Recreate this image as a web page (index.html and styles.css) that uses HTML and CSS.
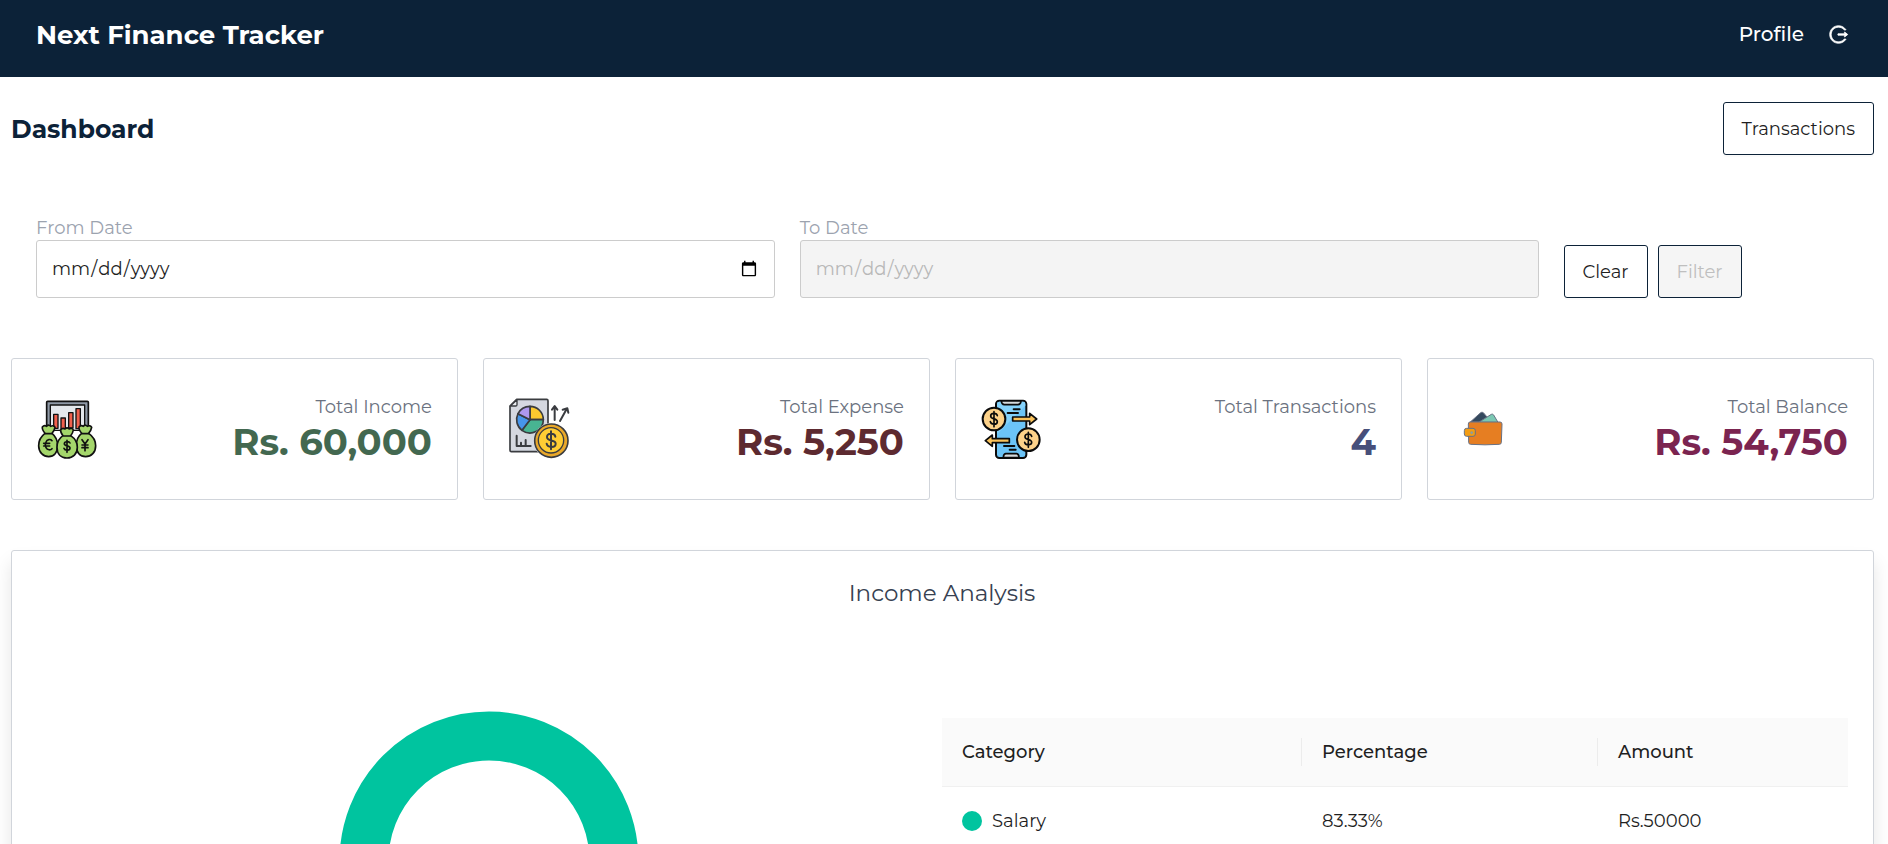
FILE: index.html
```html
<!DOCTYPE html>
<html lang="en">
<head>
<meta charset="utf-8">
<meta name="viewport" content="width=device-width, initial-scale=1">
<title>Next Finance Tracker</title>
<link rel="stylesheet" href="styles.css">
</head>
<body>
<header class="topbar">
  <a class="brand" href="#">Next Finance Tracker</a>
  <nav class="topbar-nav">
    <a class="profile" href="#profile">Profile</a>
    <button class="logout" type="button" aria-label="Log out">
      <svg viewBox="0 0 1024 1024" width="21" height="21" fill="currentColor" stroke="currentColor" stroke-width="36"><path d="M868 732h-70.3c-4.8 0-9.3 2.1-12.3 5.8-7 8.5-14.5 16.7-22.4 24.5a353.84 353.84 0 01-112.7 75.9A352.8 352.8 0 01512.4 866c-47.9 0-94.3-9.4-137.9-27.8a353.84 353.84 0 01-112.7-75.9 353.28 353.28 0 01-76-112.5C167.3 606.2 158 559.9 158 512s9.4-94.2 27.8-137.8c17.8-42.1 43.4-80 76-112.5s70.5-58.1 112.7-75.9c43.6-18.4 90-27.8 137.9-27.8 47.9 0 94.3 9.3 137.9 27.8 42.2 17.8 80.1 43.4 112.7 75.9 7.9 7.9 15.3 16.1 22.4 24.5 3 3.7 7.6 5.8 12.3 5.8H868c6.3 0 10.2-7 6.7-12.3C798 160.5 663.8 81.6 511.3 82 271.7 82.6 79.6 277.1 82 516.4 84.4 751.9 276.2 942 512.4 942c152.1 0 285.7-78.8 362.3-197.7 3.4-5.3-.4-12.3-6.7-12.3zm88.9-226.3L815 393.7c-5.3-4.2-13-.4-13 6.3v76H488c-4.4 0-8 3.6-8 8v56c0 4.4 3.6 8 8 8h314v76c0 6.7 7.8 10.5 13 6.3l141.9-112a8 8 0 000-12.6z"/></svg>
    </button>
  </nav>
</header>

<main class="page">
  <div class="page-head">
    <h1 class="page-title">Dashboard</h1>
    <button class="btn" type="button">Transactions</button>
  </div>

  <form class="filters">
    <div class="field">
      <label class="field-label" for="from-date">From Date</label>
      <input class="field-input" type="date" id="from-date">
    </div>
    <div class="field">
      <label class="field-label" for="to-date">To Date</label>
      <input class="field-input" type="date" id="to-date" disabled>
    </div>
    <div class="filter-actions">
      <button class="btn" type="reset">Clear</button>
      <button class="btn" type="submit" disabled>Filter</button>
    </div>
  </form>

  <section class="stats">
    <article class="card stat">
      <svg class="stat-icon" viewBox="48 52 186 186" stroke="#111" stroke-width="5" stroke-linejoin="round" stroke-linecap="round">
        <rect x="80" y="62" width="125" height="84" rx="3" fill="#8f99a6"/>
        <rect x="91" y="73" width="103" height="76" fill="#e4e8ec" stroke-width="4"/>
        <g fill="#f0604d" stroke-width="4">
          <rect x="101" y="101" width="13" height="42"/><rect x="123" y="112" width="13" height="32"/><rect x="146" y="96" width="13" height="46"/><rect x="168" y="84" width="13" height="60"/>
        </g>
        <g fill="#a4d66b">
          <path d="M75 158c-5-6-9-13-8-19 4-5 10-4 13-2 4-5 10-4 12 0 5-3 11-2 13 3-1 7-5 13-9 18 11 9 17 21 17 37 0 20-11 33-27 33s-30-13-30-33c0-16 7-28 19-37z"/>
          <path d="M185 158c-5-6-9-13-8-19 4-5 10-4 13-2 4-5 10-4 12 0 5-3 11-2 13 3-1 7-5 13-9 18 13 9 21 21 21 37 0 20-13 33-30 33s-28-13-28-33c0-16 4-28 16-37z"/>
          <path d="M129 165c-5-6-8-12-7-18 4-5 10-4 13-2 4-5 10-4 12 0 5-3 11-2 13 3-1 7-4 12-8 17 12 8 20 19 20 35 0 20-13 32-31 32s-30-12-30-32c0-16 6-27 18-35z"/>
        </g>
        <path d="M77 159h17M131 166h20M187 159h18" fill="none"/>
        <g fill="none" stroke-width="5">
          <path d="M96 180c-4-5-15-5-18 4-3 7-2 13 0 17 4 8 14 8 18 3M71 188h18M71 196h18"/>
          <path d="M150 187c-3-6-17-5-17 2 0 9 17 4 17 13 0 8-15 9-18 1M141 179v36"/>
          <path d="M186 177l9 13 9-13M195 190v20M186 193h18M186 201h18"/>
        </g>
      </svg>
      <div class="stat-body"><h2 class="stat-label">Total Income</h2><p class="stat-value income">Rs. 60,000</p></div>
    </article>
    <article class="card stat">
      <svg class="stat-icon" viewBox="54 55 186 186" stroke="#3a3c40" stroke-width="5" stroke-linejoin="round" stroke-linecap="round">
        <path d="M80 59h90q4 0 4 4v150q0 3-4 3H64q-4 0-4-4V79z" fill="#d5d8e0"/>
        <path d="M81 60v15q0 4-4 4H61z" fill="#eceef2" stroke-width="4"/>
        <path d="M120 120V80a40 40 0 0 1 40 40z" fill="#fbc92f"/>
        <path d="M120 120h40a40 40 0 0 1-64 32z" fill="#48b492"/>
        <path d="M120 120l-24 32a40 40 0 0 1-12-50z" fill="#4695ea"/>
        <path d="M120 120l-36-18a40 40 0 0 1 36-22z" fill="#ae98ee"/>
        <path d="M80 168v31h42M93 199v-10M107 199v-18M194 121V80M186 90l8-11 8 11M210 124l20-36M218 90l14-4 3 13" fill="none" stroke-width="6"/>
        <circle cx="184" cy="183" r="53" fill="#fff" stroke="none"/>
        <circle cx="184" cy="183" r="50" fill="#e9a82a" stroke-width="5"/>
        <circle cx="183" cy="182" r="38" fill="#ffcd34" stroke-width="4"/>
        <path d="M196 171c-2-12-25-11-25 1 0 15 26 6 26 20 0 13-25 13-27 0M183 155v54" fill="none" stroke-width="6"/>
      </svg>
      <div class="stat-body"><h2 class="stat-label">Total Expense</h2><p class="stat-value expense">Rs. 5,250</p></div>
    </article>
    <article class="card stat">
      <svg class="stat-icon" viewBox="60 53 186 186" stroke="#0b0b0b" stroke-width="6" stroke-linejoin="round" stroke-linecap="round">
        <rect x="108" y="61" width="91" height="172" rx="10" fill="#6cc4f7"/>
        <path d="M112 160L196 76v-6q0-6-6-6h-72q-7 0-7 7z" fill="#84d2fb" stroke="none"/>
        <path d="M124 62h59q-1 11-9 11h-41q-8 0-9-11zM130 232q0-11 7-12h33q7 1 7 12z" fill="#d5dadd" stroke-width="5"/>
        <path d="M161 87h18M143 98h31M132 197h31M149 208h18" fill="none"/>
        <path d="M158 110h51V99l21 17-21 17v-11h-51zM148 175H97v-11l-21 17 21 17v-11h51z" fill="#f9c25c" stroke-width="5"/>
        <circle cx="102" cy="116" r="34" fill="#fdd28a"/><circle cx="205" cy="178" r="34" fill="#fdd28a"/>
        <path d="M112 106c-2-10-20-9-20 1 0 12 20 5 20 17 0 10-19 10-21 0M102 94v45M215 168c-2-10-20-9-20 1 0 12 20 5 20 17 0 10-19 10-21 0M205 156v45" fill="none" stroke-width="5"/>
      </svg>
      <div class="stat-body"><h2 class="stat-label">Total Transactions</h2><p class="stat-value count">4</p></div>
    </article>
    <article class="card stat">
      <svg class="stat-icon" viewBox="36 24 186 186" stroke="#687184" stroke-width="3" stroke-linejoin="round">
        <path d="M91 96l31-28q4-3 8 0l24 28z" fill="#34495e"/>
        <path d="M116 97l38-24q4-2 7 2l13 22z" fill="#7bc8b3"/>
        <path d="M90 96h90q6 0 6 6l-2 55q0 6-6 6-43 3-86 0-6 0-6-6l-1-55q0-6 5-6z" fill="#e67e22"/>
        <rect x="73" y="115" width="33" height="24" rx="7" fill="#f39c12"/>
        <circle cx="95" cy="128" r="3" fill="#95a5a6" stroke="#8c999b"/>
      </svg>
      <div class="stat-body"><h2 class="stat-label">Total Balance</h2><p class="stat-value balance">Rs. 54,750</p></div>
    </article>
  </section>

  <section class="card analysis">
    <h2 class="analysis-title">Income Analysis</h2>
    <div class="analysis-body">
      <div class="chart">
        <svg viewBox="0 0 300 300" width="300" height="300" role="img" aria-label="Income by category"><circle cx="150" cy="150" r="125" fill="none" stroke="#00c49f" stroke-width="49"/></svg>
      </div>
      <div class="breakdown">
        <table class="table">
          <colgroup><col class="col-category"><col class="col-percentage"><col></colgroup>
          <thead><tr><th scope="col"><span>Category</span></th><th scope="col"><span>Percentage</span></th><th scope="col"><span>Amount</span></th></tr></thead>
          <tbody><tr><td><span class="category"><span class="dot"></span>Salary</span></td><td>83.33%</td><td>Rs.50000</td></tr></tbody>
        </table>
      </div>
    </div>
  </section>
</main>
</body>
</html>
```
FILE: styles.css
```css
* { box-sizing: border-box; }

body {
  margin: 0;
  height: 100vh;
  overflow: hidden;
  background: #fff;
  color: #1f1f1f;
  font-family: Montserrat, Inter, "Open Sans", sans-serif;
  font-size: 18px;
  line-height: 28px;
}

h1, h2, p { margin: 0; }
button, input { font: inherit; }

.topbar {
  display: flex;
  align-items: center;
  justify-content: space-between;
  height: 77px;
  padding: 0 39px 8px 36px;
  background: #0c2238;
  color: #fff;
}
.brand {
  color: inherit;
  font-size: 26px;
  font-weight: 700;
  text-decoration: none;
}
.topbar-nav { display: flex; align-items: center; gap: 24px; }
.profile {
  color: inherit;
  font-size: 20px;
  font-weight: 500;
  line-height: 29px;
  text-decoration: none;
}
.logout {
  display: flex;
  padding: 0;
  border: 0;
  background: none;
  color: inherit;
}

.page { padding: 25px 14px 0 11px; }
.page-head { display: flex; align-items: center; justify-content: space-between; }
.page-title {
  color: #0c2238;
  font-size: 25px;
  font-weight: 700;
  line-height: 36px;
}

.btn {
  height: 53px;
  padding: 0 18px;
  border: 1px solid #0c2238;
  border-radius: 3px;
  background: #fff;
  color: #1f1f1f;
  box-shadow: 0 2px 0 rgba(0, 0, 0, 0.02);
}
.btn:disabled {
  background: #f5f5f5;
  color: #bfbfbf;
  box-shadow: none;
}

.filters {
  display: grid;
  grid-template-columns: repeat(12, 1fr);
  align-items: end;
  column-gap: 25px;
  padding: 61px 30px 60px 25px;
}
.field { grid-column: span 5; }
.filter-actions { grid-column: span 2; display: flex; gap: 10px; }
.field-label { display: block; color: #9ca3af; line-height: 24px; }
.field-input {
  display: block;
  width: 100%;
  height: 58px;
  padding: 0 14px;
  border: 1px solid #ccc;
  border-radius: 3px;
  background: #fff;
  color: #1f1f1f;
}
.field-input:disabled { background: #f4f4f4; color: #b8b8b8; }
.field-input:disabled::-webkit-calendar-picker-indicator { visibility: hidden; }

.card { border: 1px solid #d1d5db; border-radius: 3px; background: #fff; }

.stats { display: grid; grid-template-columns: repeat(4, 1fr); gap: 25px; }
.stat {
  display: flex;
  align-items: center;
  justify-content: space-between;
  height: 142px;
  padding: 0 25px 0 24px;
}
.stat-icon { width: 62px; height: 62px; flex: none; }
.stat-body { padding-bottom: 2px; text-align: right; }
.stat-label {
  color: #6b7280;
  font-size: 18px;
  font-weight: 400;
  line-height: 26px;
}
.stat-value { font-size: 37px; font-weight: 700; line-height: 43px; }
.income { color: #436850; }
.expense { color: #5d2a30; }
.count { color: #474f7a; }
.balance { color: #7b2450; }

.analysis {
  margin-top: 50px;
  padding: 25px 25px 25px 24px;
  box-shadow: 0 12px 18px rgba(0, 0, 0, 0.1);
}
.analysis-title {
  color: #374151;
  font-size: 23px;
  font-weight: 400;
  line-height: 34px;
  text-align: center;
}
.analysis-body {
  display: grid;
  grid-template-columns: 1fr 1fr;
  padding-top: 101px;
}
.chart { display: flex; justify-content: center; }
.breakdown { padding-top: 7px; }

.table {
  width: 100%;
  table-layout: fixed;
  border-collapse: separate;
  border-spacing: 0;
  text-align: left;
}
.col-category { width: 360px; }
.col-percentage { width: 296px; }
.table th {
  padding: 20px 0;
  border-bottom: 1px solid #f0f0f0;
  background: #fafafa;
  font-weight: 500;
}
.table th span { display: block; padding-left: 20px; }
.table th:not(:last-child) span { border-right: 1px solid #ececec; }
.table td { padding: 20px; border-bottom: 1px solid #f0f0f0; }
.category { display: flex; align-items: center; gap: 10px; }
.dot { width: 20px; height: 20px; border-radius: 50%; background: #00c49f; }
```
